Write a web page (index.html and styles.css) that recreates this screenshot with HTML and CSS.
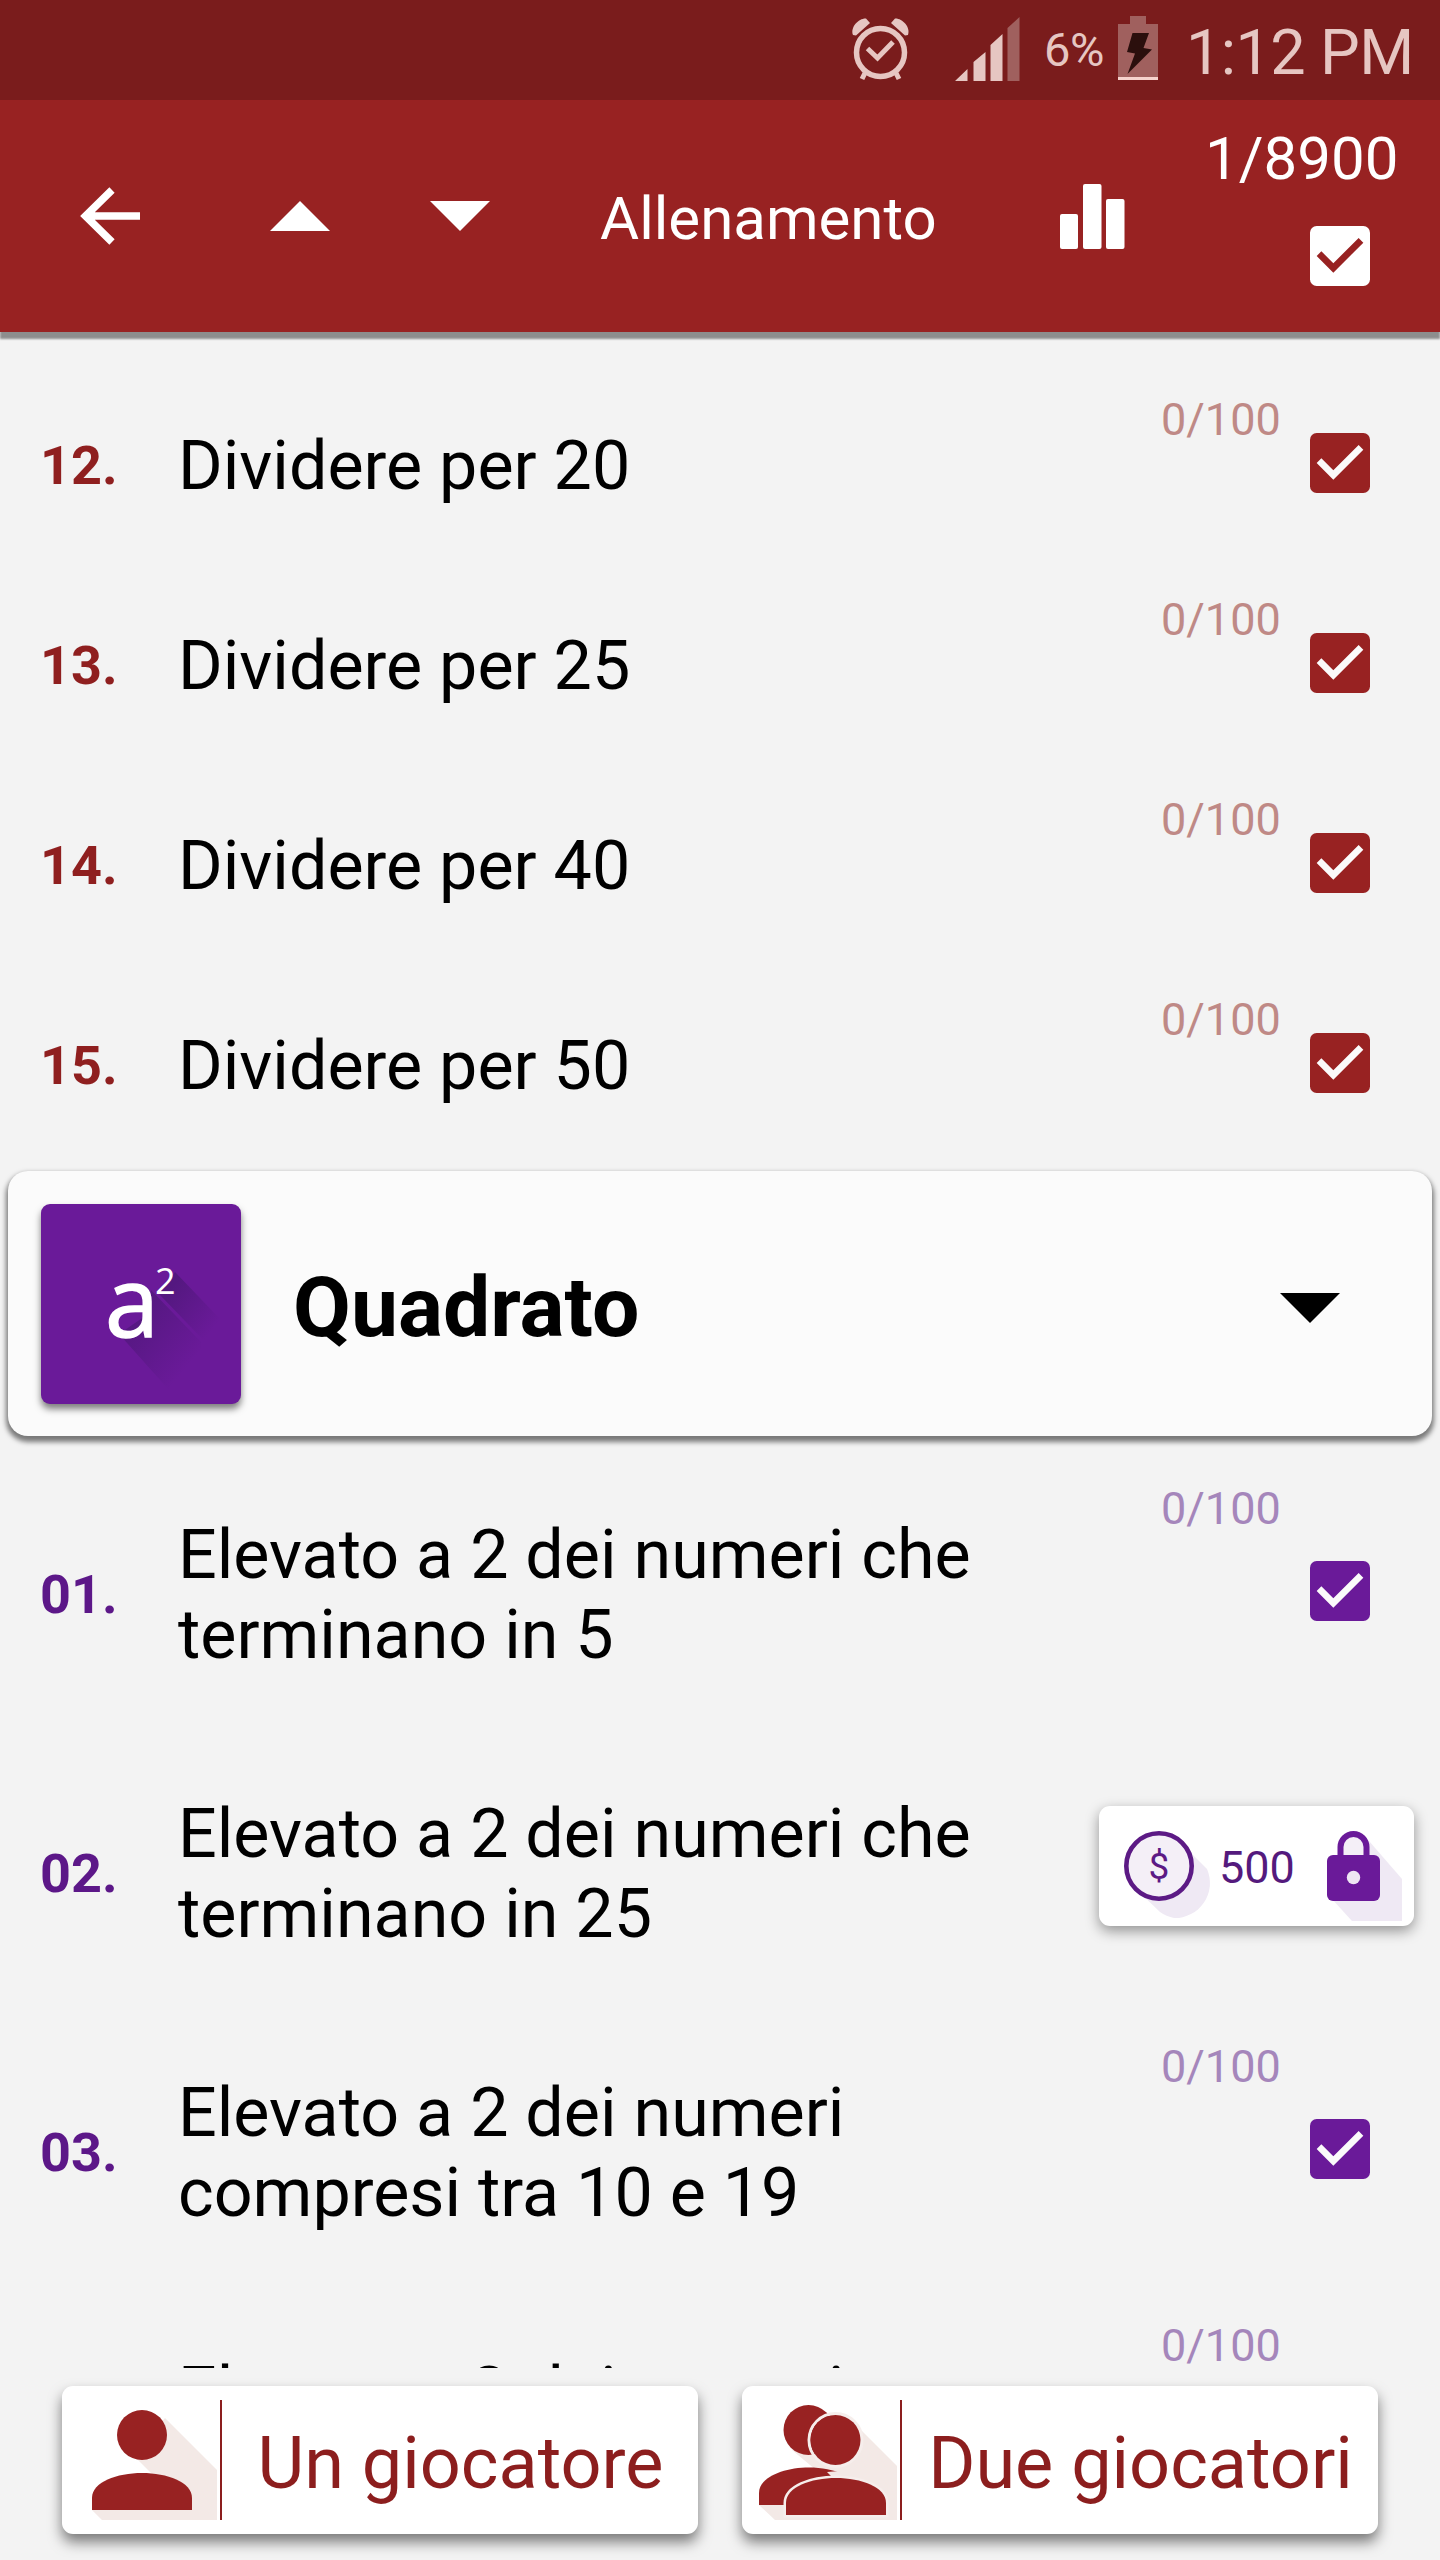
FILE: index.html
```html
<!DOCTYPE html>
<html lang="it">
<head>
    <meta charset="UTF-8">
    <meta name="viewport" content="width=device-width, initial-scale=1.0">
    <title>Allenamento</title>
    <link rel="stylesheet" href="styles.css">
</head>
<body>
    <!-- shared shapes -->
    <svg class="defs" width="0" height="0">
        <defs>
            <symbol id="check" viewBox="0 0 24 24">
                <rect x="3" y="3" width="18" height="18" rx="2" fill="currentColor"/>
                <path class="tick" d="M10 17l-5-5 1.41-1.41L10 14.17l7.59-7.59L19 8z"/>
            </symbol>
            <linearGradient id="fade" x1="0" y1="0" x2="1" y2="1">
                <stop offset="0.2" stop-color="#541880"/>
                <stop offset="0.8" stop-color="#541880" stop-opacity="0"/>
            </linearGradient>
        </defs>
    </svg>

    <div class="status-bar">
        <svg class="alarm" width="62" height="66" viewBox="0 0 62 66">
            <g fill="none" stroke="#e6c6c2" stroke-width="5.5">
                <circle cx="30.5" cy="36.5" r="24"/>
                <path d="M17.500 32.5l10 9.500L43 26" stroke-width="5"/>
                <path d="M15 57l-3 6M46 57l3 6" stroke-width="5"/>
            </g>
            <path d="M3 19C0 11 9 2 16 2.500L20 7L6 19.500zM58 19C61 11 52 2 45 2.500L41 7L55 19.500z" fill="#e6c6c2"/>
        </svg>
        <svg class="signal" width="65" height="66" viewBox="0 0 65 66">
            <path d="M0 65L12.500 53V65zM18.500 65V46L30.500 36V65zM35.500 65V29L47.500 18V65z" fill="#e6c6c2"/>
            <path d="M52.500 65V12L64.500 1V65z" fill="#a0605e"/>
        </svg>
        <span class="battery-level">6%</span>
        <svg class="battery" width="40" height="66" viewBox="0 0 40 66">
            <path d="M12 0H28V8H40V61H0V8H12z" fill="#a0605e"/>
            <path d="M0 61H40V64H0z" fill="#f6d3cd"/>
            <path d="M14.500 17H31L25.500 32L34 33.500L9.500 58L17 37.500L9 36z" fill="#2b0f0d"/>
        </svg>
        <span class="clock">1:12 PM</span>
    </div>

    <header class="toolbar">
        <svg class="back" width="60" height="60" viewBox="0 0 60 60">
            <path d="M60 30H7M32 4L5.500 30L32 56" fill="none" stroke="#fff" stroke-width="7.500"/>
        </svg>
        <svg class="up" width="60" height="30" viewBox="0 0 60 30"><path d="M30 0L60 30H0z" fill="#fff"/></svg>
        <svg class="down" width="60" height="30" viewBox="0 0 60 30"><path d="M0 0H60L30 30z" fill="#fff"/></svg>
        <h1>Allenamento</h1>
        <svg class="stats" width="65" height="65" viewBox="0 0 65 65" fill="#fff">
            <rect x="0" y="30" width="18" height="35" rx="2"/>
            <rect x="23" y="0" width="18.500" height="65" rx="2"/>
            <rect x="46" y="15" width="18.500" height="50" rx="2"/>
        </svg>
        <div class="total">
            <span>1/8900</span>
            <svg class="check" width="80" height="80"><use href="#check"/></svg>
        </div>
    </header>

    <main class="content">
        <ul class="list red">
            <li class="row">
                <span class="number">12.</span>
                <span class="title">Dividere per 20</span>
                <span class="count">0/100</span>
                <svg class="check" width="80" height="80"><use href="#check"/></svg>
            </li>
            <li class="row">
                <span class="number">13.</span>
                <span class="title">Dividere per 25</span>
                <span class="count">0/100</span>
                <svg class="check" width="80" height="80"><use href="#check"/></svg>
            </li>
            <li class="row">
                <span class="number">14.</span>
                <span class="title">Dividere per 40</span>
                <span class="count">0/100</span>
                <svg class="check" width="80" height="80"><use href="#check"/></svg>
            </li>
            <li class="row">
                <span class="number">15.</span>
                <span class="title">Dividere per 50</span>
                <span class="count">0/100</span>
                <svg class="check" width="80" height="80"><use href="#check"/></svg>
            </li>
        </ul>

        <section class="category">
            <svg class="tile" width="200" height="200" viewBox="0 0 200 200">
                <path d="M78 130L110 108V86L160 138V186H128z" fill="url(#fade)"/>
                <path d="M118 90L134 68L180 116V146H172z" fill="url(#fade)"/>
                <text x="64" y="133" font-size="97" stroke="#fff" stroke-width="1.500">a</text>
                <text x="114" y="90" font-size="36">2</text>
            </svg>
            <h2>Quadrato</h2>
            <svg class="caret" width="60" height="30" viewBox="0 0 60 30"><path d="M0 0H60L30 30z"/></svg>
        </section>

        <ul class="list purple">
            <li class="row tall">
                <span class="number">01.</span>
                <span class="title">Elevato a 2 dei numeri che terminano in 5</span>
                <span class="count">0/100</span>
                <svg class="check" width="80" height="80"><use href="#check"/></svg>
            </li>
            <li class="row tall">
                <span class="number">02.</span>
                <span class="title">Elevato a 2 dei numeri che terminano in 25</span>
                <div class="unlock">
                    <svg width="96" height="100" viewBox="0 0 96 100">
                        <path d="M60 25L83 48A35 35 0 0 1 50 97A35 35 0 0 1 36 91L12 68z" fill="#efe9f4"/>
                        <circle cx="35" cy="45" r="32.700" fill="#f4eff7" stroke="#5c1a85" stroke-width="4.600"/>
                        <text x="35" y="58" font-size="37" text-anchor="middle" fill="#5c1a85">$</text>
                    </svg>
                    <span class="price">500</span>
                    <svg width="78" height="100" viewBox="0 0 78 100">
                        <path d="M42 20L75 58V100H25L5 78z" fill="#efe9f4"/>
                        <path d="M13.500 38V26a13 13 0 0 1 26 0V38" fill="#f4eff7" stroke="#6a1a99" stroke-width="6"/>
                        <rect x="0" y="34" width="53" height="46" rx="6" fill="#6a1a99"/>
                        <circle cx="26.500" cy="56.500" r="6.700" fill="#eee6f3"/>
                    </svg>
                </div>
            </li>
            <li class="row tall">
                <span class="number">03.</span>
                <span class="title">Elevato a 2 dei numeri compresi tra 10 e 19</span>
                <span class="count">0/100</span>
                <svg class="check" width="80" height="80"><use href="#check"/></svg>
            </li>
            <li class="row tall">
                <span class="number">04.</span>
                <span class="title">Elevato a 2 dei numeri compresi tra 20 e 29</span>
                <span class="count">0/100</span>
                <svg class="check" width="80" height="80"><use href="#check"/></svg>
            </li>
        </ul>
    </main>

    <footer class="players">
        <button class="player">
            <svg width="158" height="120" viewBox="0 0 158 120">
                <path d="M103 18L155 70V120H40L30 110L90 74L72 56z" fill="#f3e9e6"/>
                <g fill="#982222">
                    <circle cx="80" cy="35" r="25"/>
                    <path d="M30 110V98C30 82 55 73 80 73S130 82 130 98V110z"/>
                </g>
            </svg>
            <span>Un giocatore</span>
        </button>
        <button class="player">
            <svg width="158" height="120" viewBox="0 0 158 120">
                <path d="M117 28L155 66V120H33L17 105L80 75L50 50z" fill="#f3e9e6"/>
                <g fill="#982222">
                    <circle cx="66.500" cy="30" r="25"/>
                    <path d="M17 105V93C17 77 42 67.500 67 67.500S117 77 117 93V105z"/>
                </g>
                <g fill="#982222">
                    <path d="M91 78C104 78 117 80.500 127 85L110 70L85 72z" fill="#f3e9e6"/>
                    <circle cx="93.500" cy="40" r="26.500" fill="none" stroke="#f6eeec" stroke-width="3"/>
                    <circle cx="93.500" cy="40" r="25"/>
                    <path d="M44 115V103C44 87 69 78 94 78S144 87 144 103V115z" stroke="#f6eeec" stroke-width="5" paint-order="stroke"/>
                </g>
            </svg>
            <span>Due giocatori</span>
        </button>
    </footer>
</body>
</html>
```

FILE: styles.css
```css
* {
    box-sizing: border-box;
}
body {
    display: flex;
    flex-direction: column;
    width: 1440px;
    height: 2560px;
    margin: 0;
    overflow: hidden;
    background-color: #f3f3f3;
    font-family: Roboto, sans-serif;
    color: #000;
}
svg {
    display: block;
    flex: none;
}
.defs {
    position: absolute;
}
.status-bar {
    display: flex;
    align-items: flex-start;
    justify-content: flex-end;
    height: 100px;
    padding: 16px 25px 0 0;
    background-color: #7a1c1c;
    color: #e6c6c2;
}
.signal {
    margin-left: 43px;
}
.battery-level {
    width: 73px;
    margin: 7px 0 0 24px;
    font-size: 47px;
    line-height: 54px;
    letter-spacing: -0.5px;
}
.battery {
    margin-left: 1px;
}
.clock {
    width: 229px;
    margin: 0 0 0 28px;
    font-size: 63px;
    line-height: 74px;
    letter-spacing: -0.6px;
    white-space: nowrap;
}
.toolbar {
    display: flex;
    align-items: center;
    position: relative;
    z-index: 1;
    height: 232px;
    padding-left: 80px;
    background-color: #982222;
    box-shadow: 0 7px 2px rgba(0, 0, 0, 0.42);
    color: #fff;
}
.up {
    margin-left: 130px;
}
.down {
    margin-left: 100px;
}
h1 {
    width: 340px;
    margin: 5px 0 0 110px;
    font-size: 60px;
    font-weight: 400;
    line-height: 70px;
}
.stats {
    margin-left: 120px;
}
.total {
    align-self: flex-start;
    width: 195px;
    margin: 24px 0 0 80px;
    font-size: 60px;
    line-height: 70px;
}
.total .check {
    margin: 22px 0 0 95px;
    --tick: #982222;
}
.tick {
    fill: var(--tick, #fbfbfb);
}
.content {
    flex: 1;
    min-height: 0;
    overflow: hidden;
    padding-top: 31px;
}
.list {
    margin: 0;
    padding: 0;
    list-style: none;
}
.row {
    display: grid;
    grid-template-columns: 138px 902px 81px 139px 80px;
    align-items: center;
    height: 200px;
    padding-left: 40px;
}
.row.tall {
    height: 279px;
}
.number {
    padding-top: 5px;
    font-size: 54px;
    font-weight: 700;
}
.title {
    padding-top: 6px;
    font-size: 68.2px;
    line-height: 80px;
}
.count {
    grid-column: 4;
    align-self: start;
    padding-top: 30px;
    font-size: 45px;
    line-height: 53px;
}
.red {
    color: #982222;
}
.purple {
    color: #6a1a99;
}
.red .number {
    color: #8f1f1f;
}
.purple .number {
    color: #5c1788;
}
.list .title {
    color: #000;
}
.red .count {
    color: #bf8986;
}
.purple .count {
    color: #a586bb;
}
.purple .check {
    margin-bottom: 1px;
}
.category {
    display: flex;
    align-items: center;
    height: 265px;
    margin: 8px 8px 16px;
    padding: 0 92px 0 33px;
    background-color: #fbfbfb;
    border-radius: 20px;
    box-shadow: 0 4px 5px 2px rgba(0, 0, 0, 0.5);
}
.tile {
    border-radius: 9px;
    background-color: #6a1a99;
    box-shadow: 0 5px 7px rgba(0, 0, 0, 0.5);
    fill: #fff;
    font-family: "Open Sans", sans-serif;
}
h2 {
    flex: 1;
    margin: 8px 0 0 52px;
    font-size: 84px;
    font-weight: 700;
    line-height: 98px;
}
.caret {
    margin-top: 8px;
}
.unlock {
    grid-column: 3 / 6;
    display: flex;
    align-items: center;
    width: 315px;
    height: 120px;
    margin: 0 0 10px 19px;
    padding: 3px 0 0 25px;
    background-color: #fff;
    border-radius: 11px;
    box-shadow: 0 5px 14px rgba(0, 0, 0, 0.4);
}
.price {
    width: 108px;
    margin-left: -1px;
    font-size: 45px;
    line-height: 53px;
    color: #541a7d;
}
.unlock svg {
    margin-top: 7px;
}
.players {
    display: flex;
    gap: 44px;
    height: 192px;
    padding: 18px 62px 0;
}
.player {
    display: flex;
    align-items: center;
    width: 636px;
    height: 148px;
    padding: 0;
    border: 0;
    border-radius: 11px;
    background-color: #fff;
    box-shadow: 0 8px 14px rgba(0, 0, 0, 0.5);
    font-family: Roboto, sans-serif;
    font-size: 72px;
    line-height: 84px;
    color: #8c1e1e;
}
.player svg {
    border-right: 2px solid #8c1e1e;
    box-sizing: content-box;
}
.player span {
    flex: 1;
    padding: 7px 0 0 1px;
    text-align: center;
}
```
